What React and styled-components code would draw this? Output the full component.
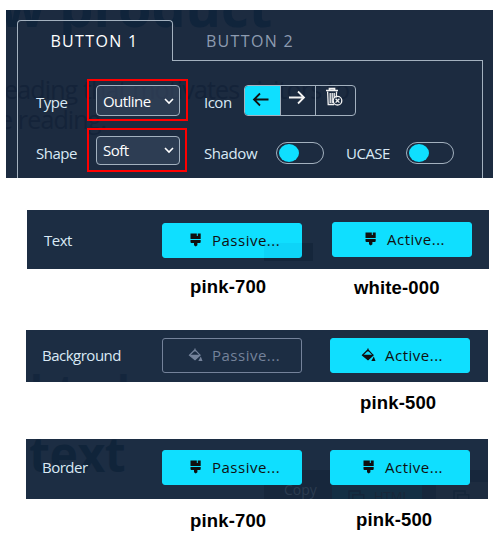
import React from 'react';
import styled, { createGlobalStyle } from 'styled-components';

const navy = '#1c2b40';
const cyan = '#0fdfff';

const Global = createGlobalStyle`
  *, *::before, *::after { box-sizing: border-box; }
  body { margin: 0; background: #fff; }
  button, select { font: inherit; }
`;

const Page = styled.main`
  display: flex;
  flex-direction: column;
  width: 496px;
  height: 536px;
  padding-top: 10px;
  overflow: hidden;
  background: #fff;
  font: 15px/20px "Open Sans", "Noto Sans", sans-serif;
`;

const Panel = styled.section`
  position: relative;
  isolation: isolate;
  overflow: hidden;
  flex: none;
  background: ${navy};
`;

const SettingsPanel = styled(Panel)`
  display: flex;
  flex-direction: column;
  width: 487px;
  height: 168px;
  margin-left: 6px;
  padding: 10px 10px 0 11px;
`;

const Ghost = styled.span`
  position: absolute;
  z-index: -1;
  left: ${p => p.$x}px;
  top: ${p => p.$y}px;
  color: ${p => p.$color || '#142339'};
  font-size: ${p => p.$size}px;
  font-weight: ${p => p.$weight || 400};
  letter-spacing: ${p => p.$track || 0}px;
  line-height: 1;
  white-space: nowrap;
`;

const GhostBox = styled.div`
  position: absolute;
  z-index: ${p => (p.$over ? 1 : -1)};
  left: ${p => p.$x}px;
  top: ${p => p.$y}px;
  width: ${p => p.$w}px;
  height: ${p => p.$h}px;
  background: ${p => p.$color};
`;

const GhostIcon = styled.svg`
  position: absolute;
  z-index: -1;
  left: ${p => p.$x}px;
  top: ${p => p.$y}px;
`;

const Tabs = styled.div`
  display: flex;
  height: 41px;
  flex: none;
`;

const Tab = styled.button`
  width: ${p => (p.$active ? 156 : 154)}px;
  padding: ${p => (p.$active ? '0 1px 1px 0' : '1px 0 0')};
  background: none;
  border: solid ${p => (p.$active ? '#a3b1bf' : 'transparent')};
  border-width: ${p => (p.$active ? '1px 1px 0' : '1px 0')};
  border-bottom-color: #a3b1bf;
  border-radius: ${p => (p.$active ? '4px 4px 0 0' : '0')};
  color: ${p => (p.$active ? '#fff' : '#8d9bb0')};
  font-size: 16px;
  letter-spacing: 1.35px;
`;

const TabRule = styled.div`
  flex: 1;
  border-bottom: 1px solid #a3b1bf;
`;

const SettingsBody = styled.div`
  flex: 1;
  display: flex;
  flex-direction: column;
  padding-top: 18px;
  border: solid #a3b1bf;
  border-width: 0 1px;
`;

const SettingsRow = styled.div`
  display: grid;
  grid-template-columns: 51px 101px 16px 40px 1fr;
  height: ${p => p.$h}px;
  margin-bottom: 7px;
  padding-left: 18px;
`;

const SwitchRow = styled(SettingsRow)`
  grid-template-columns: 51px 101px 16px 72px 70px 60px 1fr;
`;

const Label = styled.span`
  display: block;
  margin-top: ${p => p.$top || 0}px;
  color: #d9e9f5;
  letter-spacing: ${p => (p.$track === undefined ? -0.5 : p.$track)}px;
  white-space: nowrap;
`;

const Highlight = styled.div`
  width: ${p => p.$w}px;
  height: ${p => p.$h}px;
  padding: ${p => p.$pad}px 0 0 7px;
  border: 2px solid #f00;
`;

const SelectBox = styled.div`
  display: flex;
  align-items: center;
  justify-content: space-between;
  width: 84px;
  height: ${p => p.$h}px;
  padding: ${p => (p.$h > 30 ? '1px 5px 0 6px' : '0 5px 1px 6px')};
  border: 1px solid #a3b1bf;
  border-radius: 4px;
  background: rgba(55, 70, 94, 0.65);
  color: #fff;
  letter-spacing: -0.55px;
`;

const IconGroup = styled.div`
  display: flex;
  width: 112px;
  height: 31px;
  margin-top: 6px;
  border: 1px solid #a3b1bf;
  border-radius: 4px;
  overflow: hidden;
`;

const IconChoice = styled.button`
  display: flex;
  width: ${p => p.$w}px;
  margin: ${p => (p.$active ? '-1px 0 -1px -1px' : '0')};
  padding: 0;
  border: 0;
  border-right: ${p => (p.$last ? 0 : 1)}px solid #a3b1bf;
  background: ${p => (p.$active ? cyan : 'transparent')};
  color: ${p => (p.$active ? '#111' : '#f2f2f2')};
`;

const Switch = styled.div`
  width: 48px;
  height: 22px;
  margin-top: 14px;
  padding: 1px 2px;
  border: 1px solid #a3b1bf;
  border-radius: 11px;

  &::before {
    content: "";
    display: block;
    width: 20px;
    height: 18px;
    border-radius: 50%;
    background: ${cyan};
  }
`;

const ColorPanel = styled(Panel)`
  display: grid;
  grid-template-columns: ${p => p.$cols};
  width: 462px;
  height: ${p => p.$h}px;
  margin-top: ${p => p.$gap || 0}px;
  margin-left: ${p => p.$left}px;
  padding: ${p => p.$pad};
  background: #1c2d43;
`;

const ColorButton = styled.button`
  display: flex;
  align-items: center;
  width: 140px;
  height: 35px;
  margin-top: ${p => p.$top || 0}px;
  padding: 0 0 1px ${p => p.$indent}px;
  gap: 9px;
  border: 1px solid ${p => (p.$outline ? '#74829a' : cyan)};
  border-radius: 3px;
  background: ${p => (p.$outline ? 'transparent' : cyan)};
  color: ${p => (p.$outline ? '#74829a' : '#101010')};
  letter-spacing: 0.5px;
  white-space: nowrap;

  svg { flex: none; }
`;

const Captions = styled.div`
  display: flex;
  flex: none;
  height: ${p => p.$h}px;
  padding: ${p => p.$pad};
`;

const Caption = styled.span`
  width: ${p => p.$w}px;
  margin-top: ${p => p.$top || 0}px;
  color: #000;
  font: bold 18.5px/20px "Liberation Sans", Arial, sans-serif;
  letter-spacing: 0.15px;
`;

const Chevron = () => (
  <svg width="10" height="8" viewBox="0 0 10 8" fill="none" stroke="#fff" strokeWidth="1.6">
    <path d="M1 2l4 4 4-4" />
  </svg>
);

const ArrowLeft = () => (
  <svg width="36" height="31" fill="none" stroke="currentColor" strokeWidth="1.8">
    <path d="M24.5 14.5H10M16 8.5l-6 6 6 6" />
  </svg>
);

const ArrowRight = () => (
  <svg width="34" height="29" fill="none" stroke="currentColor" strokeWidth="1.8">
    <path d="M8 11.5h14.5M17 5.5l6 6-6 6" />
  </svg>
);

const TrashOff = () => (
  <svg width="39" height="29" fill="none" stroke="currentColor" strokeWidth="1.3">
    <path d="M10 4.5h12M13.5 4V2.6h5V4" strokeWidth="1.7" />
    <path d="M11.6 5.5l.6 13h6M20.6 5.5l-.3 6M14.2 7v10M16.2 7v10M18.2 7v5" />
    <circle cx="21.5" cy="14.7" r="4.3" />
    <path d="M19.6 12.8l3.8 3.8M23.4 12.8l-3.8 3.8" />
  </svg>
);

const Brush = () => (
  <svg width="15" height="14" viewBox="0 0 15 14" fill="currentColor">
    <path d="M2.5 .5h6.3v2.6h1V.5h2.9v5.6H2.5zM2.5 7.1h10.2v1.8q0 1-1 1H9.4v2.3L7.7 13.6 6 12.2V9.9H3.5q-1 0-1-1z" />
  </svg>
);

const Bucket = () => (
  <svg width="15" height="14" viewBox="0 0 15 14" fill="none" stroke="currentColor">
    <path d="M7 .5v3M7 1.8L1.5 7.2 7 11.6l5-4.4z" strokeWidth="1.2" />
    <path d="M1.2 6.8h11.4L7 12z" fill="currentColor" stroke="none" />
    <path d="M12.8 8.5l1.7 4.6h-4.2z" fill="currentColor" stroke="none" />
  </svg>
);

const CopyGlyph = ({ x }) => (
  <GhostIcon $x={x} $y={51} width="17" height="17" fill="none" stroke="#15263a" strokeWidth="1.4">
    <path d="M4 12H1V1h11v3M4.7 4.7h11v11h-11z" />
  </GhostIcon>
);

const ColorChoice = ({ icon: Icon, label, ...rest }) => (
  <ColorButton {...rest}>
    <Icon />
    <span>{label}</span>
  </ColorButton>
);

export default function App() {
  return (
    <>
      <Global />
      <Page>
        <SettingsPanel>
          <Ghost $x={-7} $y={-31} $size={54} $weight={700} $color="#10243b">w product</Ghost>
          <Ghost $x={-2} $y={67} $size={25} $track={-0.85}>eading that motivates visitors to</Ghost>
          <Ghost $x={-7} $y={97} $size={25} $track={-0.85}>e reading.</Ghost>
          <Tabs>
            <Tab $active>BUTTON 1</Tab>
            <Tab>BUTTON 2</Tab>
            <TabRule />
          </Tabs>
          <SettingsBody>
            <SettingsRow $h={42}>
              <Label $top={13}>Type</Label>
              <Highlight $w={101} $h={42} $pad={4}>
                <SelectBox $h={31}>Outline<Chevron /></SelectBox>
              </Highlight>
              <span />
              <Label $top={13}>Icon</Label>
              <IconGroup>
                <IconChoice $active $w={37}><ArrowLeft /></IconChoice>
                <IconChoice $w={35}><ArrowRight /></IconChoice>
                <IconChoice $last $w={39}><TrashOff /></IconChoice>
              </IconGroup>
            </SettingsRow>
            <SwitchRow $h={44}>
              <Label $top={15}>Shape</Label>
              <Highlight $w={100} $h={44} $pad={6}>
                <SelectBox $h={29}>Soft<Chevron /></SelectBox>
              </Highlight>
              <span />
              <Label $top={15} $track={-0.4}>Shadow</Label>
              <Switch />
              <Label $top={15}>UCASE</Label>
              <Switch />
            </SwitchRow>
          </SettingsBody>
        </SettingsPanel>

        <ColorPanel $cols="118px 170px 140px" $h={59} $gap={32} $left={27} $pad="12px 0 0 17px">
          <GhostBox $x={237} $y={33} $w={49} $h={18} $color="#15263b" />
          <GhostBox $over $x={237} $y={33} $w={38} $h={15} $color="rgba(0, 120, 190, 0.1)" />
          <Label $top={8}>Text</Label>
          <ColorChoice icon={Brush} label="Passive..." $indent={25} $top={1} />
          <ColorChoice icon={Brush} label="Active..." $indent={30} />
        </ColorPanel>
        <Captions $h={61} $pad="8px 0 0 190px">
          <Caption $w={164}>pink-700</Caption>
          <Caption $w={100} $top={1}>white-000</Caption>
        </Captions>

        <ColorPanel $cols="120px 168px 140px" $h={52} $left={26} $pad="8px 0 0 16px">
          <Ghost $x={4} $y={38} $size={42} $weight={700} $color="#14263d">html</Ghost>
          <Label $top={7}>Background</Label>
          <ColorChoice icon={Bucket} label="Passive..." $indent={25} $outline />
          <ColorChoice icon={Bucket} label="Active..." $indent={30} />
        </ColorPanel>
        <Captions $h={57} $pad="11px 0 0 360px">
          <Caption $w={100}>pink-500</Caption>
        </Captions>

        <ColorPanel $cols="120px 168px 140px" $h={60} $left={26} $pad="11px 0 0 16px">
          <Ghost $x={3} $y={-9} $size={48} $weight={700} $track={-0.4} $color="#10243a">text</Ghost>
          <GhostBox $x={238} $y={31} $w={224} $h={29} $color="#17273c" />
          <GhostBox $x={306} $y={43} $w={90} $h={17} $color="#142f44" />
          <GhostBox $x={410} $y={43} $w={52} $h={17} $color="#1d2c40" />
          <Ghost $x={258} $y={44} $size={14} $color="#2c3c50">Copy</Ghost>
          <CopyGlyph x={322} />
          <Ghost $x={348} $y={51} $size={13} $color="#1a2739">HTML</Ghost>
          <CopyGlyph x={427} />
          <Label $top={7}>Border</Label>
          <ColorChoice icon={Brush} label="Passive..." $indent={25} />
          <ColorChoice icon={Brush} label="Active..." $indent={30} />
        </ColorPanel>
        <Captions $h={37} $pad="12px 0 0 190px">
          <Caption $w={166}>pink-700</Caption>
          <Caption $w={100} $top={-1}>pink-500</Caption>
        </Captions>
      </Page>
    </>
  );
}
